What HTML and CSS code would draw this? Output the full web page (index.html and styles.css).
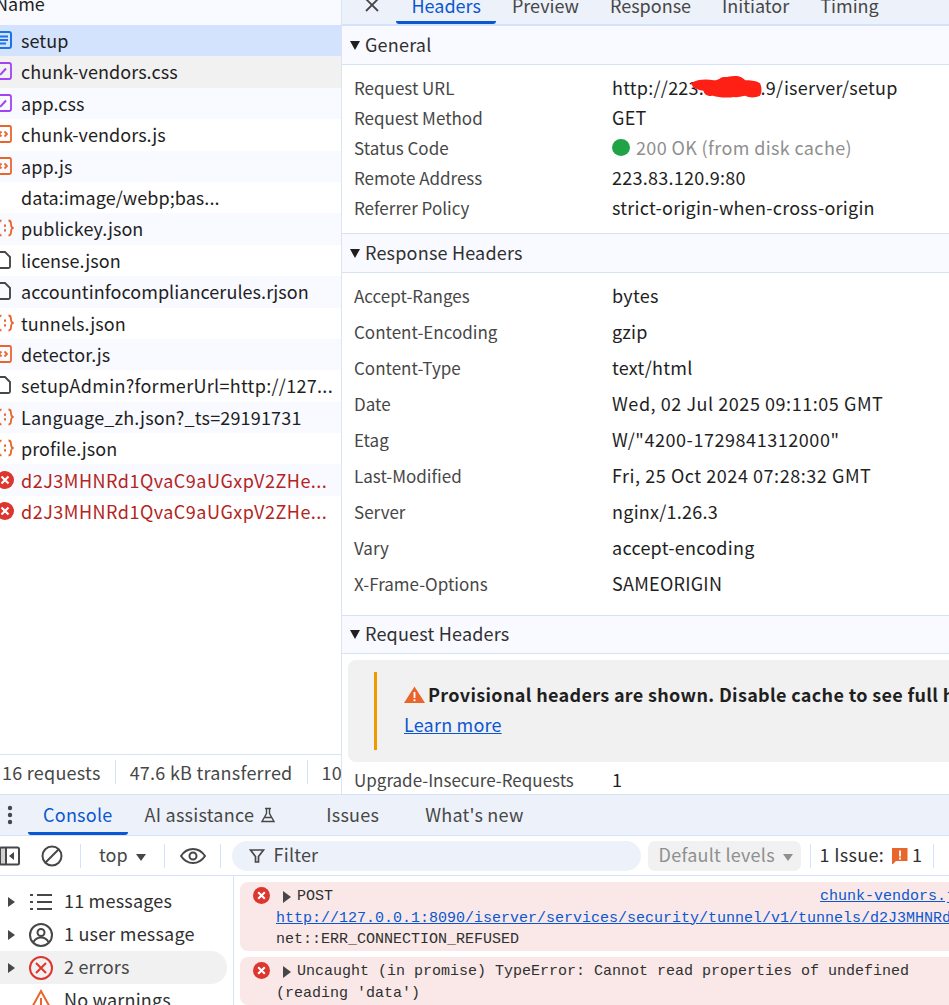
FILE: index.html
```html
<!DOCTYPE html>
<html lang="en">
<head>
<meta charset="utf-8">
<title>DevTools Network</title>
<link rel="stylesheet" href="styles.css">
</head>
<body>
<svg class="defs" width="0" height="0" aria-hidden="true">
  <defs>
    <symbol id="i-doc" viewBox="0 0 18 18"><rect x="1" y="1" width="16" height="16" rx="2" fill="#d3e3fd" stroke="#1a73e8" stroke-width="2"/><path d="M4 5.500h10M4 9h10M4 12.500h8" stroke="#1a73e8" stroke-width="1.800" fill="none"/></symbol>
    <symbol id="i-css" viewBox="0 0 18 18"><rect x="1" y="1" width="16" height="16" rx="2" fill="none" stroke="#a142f4" stroke-width="1.800"/><path d="M3 14l4-2 5-5.500" stroke="#a142f4" stroke-width="2" fill="none"/></symbol>
    <symbol id="i-js" viewBox="0 0 18 18"><rect x="1" y="1" width="16" height="16" rx="1.500" fill="none" stroke="#e8652b" stroke-width="1.800"/><path d="M7.500 6.500L5 9l2.500 2.500M10.500 6.500L13 9l-2.500 2.500" stroke="#e8652b" stroke-width="1.800" fill="none"/></symbol>
    <symbol id="i-json" viewBox="0 0 18 18"><path d="M5.500 1.500c-2.500 0-2.500 1.500-2.500 3.500 0 2.500-.5 3.500-2 4 1.500.5 2 1.500 2 4 0 2 0 3.500 2.500 3.500M12.500 1.500c2.500 0 2.500 1.500 2.500 3.500 0 2.500.5 3.500 2 4-1.500.5-2 1.500-2 4 0 2 0 3.500-2.500 3.500" stroke="#e8652b" stroke-width="1.800" fill="none"/><path d="M9 5.500v2.200M9 10.300v2.200" stroke="#e8652b" stroke-width="2" fill="none"/></symbol>
    <symbol id="i-file" viewBox="0 0 18 18"><path d="M2 2.500A1.500 1.500 0 0 1 3.500 1H11l5 5v9.500a1.500 1.500 0 0 1-1.500 1.500h-11A1.500 1.500 0 0 1 2 15.500z" fill="none" stroke="#474747" stroke-width="1.900"/></symbol>
    <symbol id="i-err" viewBox="0 0 18 18"><circle cx="9" cy="9" r="9" fill="#dc362e"/><path d="M5.500 5.500l7 7M12.500 5.500l-7 7" stroke="#fff" stroke-width="2.200" fill="none"/></symbol>
  </defs>
</svg>

<main class="page">
  <div class="top">
    <section class="list">
      <div class="list-head"><span>Name</span></div>
      <ul class="rows">
        <li class="row selected"><svg class="ficon"><use href="#i-doc"/></svg><span>setup</span></li>
        <li class="row hovered"><svg class="ficon"><use href="#i-css"/></svg><span>chunk-vendors.css</span></li>
        <li class="row"><svg class="ficon"><use href="#i-css"/></svg><span>app.css</span></li>
        <li class="row"><svg class="ficon"><use href="#i-js"/></svg><span>chunk-vendors.js</span></li>
        <li class="row"><svg class="ficon"><use href="#i-js"/></svg><span>app.js</span></li>
        <li class="row"><span class="ficon"></span><span>data:image/webp;bas...</span></li>
        <li class="row"><svg class="ficon brace"><use href="#i-json"/></svg><span>publickey.json</span></li>
        <li class="row"><svg class="ficon"><use href="#i-file"/></svg><span>license.json</span></li>
        <li class="row"><svg class="ficon"><use href="#i-file"/></svg><span>accountinfocompliancerules.rjson</span></li>
        <li class="row"><svg class="ficon brace"><use href="#i-json"/></svg><span>tunnels.json</span></li>
        <li class="row"><svg class="ficon"><use href="#i-js"/></svg><span>detector.js</span></li>
        <li class="row wide"><svg class="ficon"><use href="#i-file"/></svg><span>setupAdmin?formerUrl=http://127...</span></li>
        <li class="row mid"><svg class="ficon brace"><use href="#i-json"/></svg><span>Language_zh.json?_ts=29191731</span></li>
        <li class="row"><svg class="ficon brace"><use href="#i-json"/></svg><span>profile.json</span></li>
        <li class="row failed"><svg class="ficon brace"><use href="#i-err"/></svg><span>d2J3MHNRd1QvaC9aUGxpV2ZHe...</span></li>
        <li class="row failed"><svg class="ficon brace"><use href="#i-err"/></svg><span>d2J3MHNRd1QvaC9aUGxpV2ZHe...</span></li>
      </ul>
      <div class="summary">
        <span class="sum-item first">16 requests</span>
        <span class="sum-item">47.6 kB transferred</span>
        <span class="sum-item">10</span>
      </div>
    </section>

    <section class="detail">
      <nav class="tabs">
        <svg class="close" width="16" height="16" viewBox="0 0 16 16"><path d="M2 2l12 12M14 2L2 14" stroke="#474747" stroke-width="1.800" fill="none"/></svg>
        <span class="tab active">Headers</span>
        <span class="tab">Preview</span>
        <span class="tab">Response</span>
        <span class="tab">Initiator</span>
        <span class="tab">Timing</span>
      </nav>

      <h3 class="sec"><i class="tri"></i><span>General</span></h3>
      <dl class="kv general">
        <div class="pair"><dt>Request URL</dt><dd class="url">http://223.83.120.9/iserver/setup<svg class="redact" width="75" height="23" viewBox="0 0 70 22"><path d="M1 7c6-4 14-4 22-3 6 0 6-4 11-3 2 0 5-1 9-1 5 0 8 2 10 4 4 0 10 0 14 3 2 4 2 9 0 12-5 2-10 2-14 0-6 1-8 2-11 1-4 1-15 1-20-1-6 1-9-3-9-5-5 0-11-3-12-7z" fill="#fe2015"/></svg></dd></div>
        <div class="pair"><dt>Request Method</dt><dd>GET</dd></div>
        <div class="pair"><dt>Status Code</dt><dd class="status"><i class="dot"></i>200 OK (from disk cache)</dd></div>
        <div class="pair"><dt>Remote Address</dt><dd>223.83.120.9:80</dd></div>
        <div class="pair"><dt>Referrer Policy</dt><dd>strict-origin-when-cross-origin</dd></div>
      </dl>

      <h3 class="sec"><i class="tri"></i><span>Response Headers</span></h3>
      <dl class="kv resp">
        <div class="pair"><dt>Accept-Ranges</dt><dd>bytes</dd></div>
        <div class="pair"><dt>Content-Encoding</dt><dd>gzip</dd></div>
        <div class="pair"><dt>Content-Type</dt><dd>text/html</dd></div>
        <div class="pair"><dt>Date</dt><dd class="num">Wed, 02 Jul 2025 09:11:05 GMT</dd></div>
        <div class="pair"><dt>Etag</dt><dd class="num">W/"4200-1729841312000"</dd></div>
        <div class="pair"><dt>Last-Modified</dt><dd class="num">Fri, 25 Oct 2024 07:28:32 GMT</dd></div>
        <div class="pair"><dt>Server</dt><dd>nginx/1.26.3</dd></div>
        <div class="pair"><dt>Vary</dt><dd>accept-encoding</dd></div>
        <div class="pair"><dt>X-Frame-Options</dt><dd>SAMEORIGIN</dd></div>
      </dl>

      <h3 class="sec short"><i class="tri"></i><span>Request Headers</span></h3>
      <div class="callout">
        <div class="callout-inner">
          <p class="callout-title"><svg class="warn" width="21" height="17" viewBox="0 0 21 17"><path d="M10.500 .5L21 17H0z" fill="#e8652b"/><path d="M10.500 6v6M10.500 13.300v2" stroke="#fff" stroke-width="1.800" fill="none"/></svg><span>Provisional headers are shown. Disable cache to see full headers.</span></p>
          <a class="learn" href="#">Learn more</a>
        </div>
      </div>
      <div class="pair last"><dt>Upgrade-Insecure-Requests</dt><dd>1</dd></div>
    </section>
  </div>

  <div class="drawer">
    <nav class="dtabs">
      <svg class="kebab" width="6" height="20" viewBox="0 0 6 20"><circle cx="3" cy="3" r="2.200" fill="#474747"/><circle cx="3" cy="10" r="2.200" fill="#474747"/><circle cx="3" cy="17" r="2.200" fill="#474747"/></svg>
      <span class="dtab active"><span>Console</span></span>
      <span class="dtab ai"><span>AI assistance</span><svg width="16" height="16" viewBox="0 0 16 16"><path d="M5 1.500h6M6.500 1.500v5L2 14.500h12L9.500 6.500v-5M4.500 10.500h7" stroke="#474747" stroke-width="1.400" fill="none"/></svg></span>
      <span class="dtab"><span>Issues</span></span>
      <span class="dtab"><span>What's new</span></span>
    </nav>
    <div class="toolbar">
      <svg class="tool-side" width="21" height="20" viewBox="0 0 21 20"><rect x="1" y="1.500" width="19" height="17" rx="1.500" fill="none" stroke="#474747" stroke-width="2"/><path d="M7 1.500v17" stroke="#474747" stroke-width="2"/><path d="M1 2h6v16H1z" fill="#474747" opacity=".25"/><path d="M15 6v8l-5-4z" fill="#474747"/></svg>
      <svg class="tool-clear" width="22" height="22" viewBox="0 0 22 22"><circle cx="11" cy="11" r="9.500" fill="none" stroke="#474747" stroke-width="2"/><path d="M4.500 17.500l13-13" stroke="#474747" stroke-width="2"/></svg>
      <i class="sep"></i>
      <span class="ctx"><span class="tt">top</span><i class="caret"></i></span>
      <i class="sep"></i>
      <svg class="tool-eye" width="26" height="16" viewBox="0 0 26 16"><path d="M1 8c3-4.500 7-7 12-7s9 2.500 12 7c-3 4.500-7 7-12 7S4 12.500 1 8z" fill="none" stroke="#474747" stroke-width="2"/><circle cx="13" cy="8" r="3.500" fill="none" stroke="#474747" stroke-width="2"/></svg>
      <i class="sep"></i>
      <div class="filter"><svg width="16" height="16" viewBox="0 0 16 16"><path d="M1.500 2h13L9.500 8.500V14h-3V8.500z" fill="none" stroke="#474747" stroke-width="1.700"/></svg><span class="tt">Filter</span></div>
      <div class="levels"><span class="tt">Default levels</span><i class="caret grey"></i></div>
      <i class="sep"></i>
      <span class="issues"><span class="tt">1 Issue:</span><svg width="16" height="18" viewBox="0 0 16 18"><path d="M0 1h15.500v13H4l-3 3H0z" fill="#e8652b"/><path d="M8 3.500v6M8 10.500v2" stroke="#fff" stroke-width="1.800"/></svg><span class="tt">1</span></span>
      <i class="sep"></i>
    </div>
    <div class="console">
      <aside class="side">
        <div class="side-row"><i class="arrow"></i><svg width="24" height="24" viewBox="0 0 24 24"><path d="M8 5h15M8 12h15M8 19h15" stroke="#474747" stroke-width="2"/><path d="M1 5h3M1 12h3M1 19h3" stroke="#474747" stroke-width="2"/></svg><span class="tt">11 messages</span></div>
        <div class="side-row"><i class="arrow"></i><svg width="24" height="24" viewBox="0 0 24 24"><circle cx="12" cy="12" r="11" fill="none" stroke="#474747" stroke-width="2"/><circle cx="12" cy="9.500" r="3.500" fill="none" stroke="#474747" stroke-width="2"/><path d="M4.500 19c2-3.500 5-4.500 7.500-4.500s5.500 1 7.500 4.500" fill="none" stroke="#474747" stroke-width="2"/></svg><span class="tt">1 user message</span></div>
        <div class="side-row on"><i class="arrow"></i><svg width="24" height="24" viewBox="0 0 24 24"><circle cx="12" cy="12" r="11" fill="none" stroke="#dc362e" stroke-width="2"/><path d="M7 7l10 10M17 7L7 17" stroke="#dc362e" stroke-width="2"/></svg><span class="tt">2 errors</span></div>
        <div class="side-row"><i class="arrow none"></i><svg width="24" height="24" viewBox="0 0 24 24"><path d="M12 2l11 20H1z" fill="none" stroke="#e8652b" stroke-width="2"/><path d="M12 9v7M12 18v2" stroke="#e8652b" stroke-width="2"/></svg><span class="tt">No warnings</span></div>
      </aside>
      <div class="log">
        <div class="msg m1">
          <svg class="msg-icon"><use href="#i-err"/></svg>
          <div class="msg-body">
            <div class="msg-line"><i class="arrow dark"></i><span>POST</span><a class="src" href="#">chunk-vendors.js:2</a></div>
            <div><a href="#">http://127.0.0.1:8090/iserver/services/security/tunnel/v1/tunnels/d2J3MHNRd1QvaC9aUGxpV2ZHe</a></div>
            <div>net::ERR_CONNECTION_REFUSED</div>
          </div>
        </div>
        <div class="msg m2">
          <svg class="msg-icon"><use href="#i-err"/></svg>
          <div class="msg-body">
            <div class="msg-line"><i class="arrow dark"></i><span>Uncaught (in promise) TypeError: Cannot read properties of undefined</span></div>
            <div>(reading 'data')</div>
          </div>
        </div>
      </div>
    </div>
  </div>
</main>
</body>
</html>
```
FILE: styles.css
```css
* { box-sizing: border-box; }
html, body { margin: 0; padding: 0; overflow: hidden; background: #fff; }
body { width: 949px; height: 1005px; font-family: "Noto Sans CJK SC", "Noto Sans", sans-serif; font-size: 18px; color: #1f1f1f; }
.defs { display: block; height: 0; }
.page { display: flex; flex-direction: column; height: 1005px; width: 949px; overflow: hidden; }
.top { display: flex; height: 795px; flex: none; border-bottom: 1px solid #d6e2f5; }

.list { width: 342px; flex: none; border-right: 1px solid #dbe4f3; display: flex; flex-direction: column; }
.list-head { height: 25px; flex: none; background: #f9faff; display: flex; align-items: flex-end; overflow: hidden; }
.list-head span { margin-left: -5px; line-height: 26px; transform: translateY(-9px); }
.rows { list-style: none; margin: 0; padding: 0; flex: 1; }
.row { height: 31.4px; display: flex; align-items: center; gap: 9px; padding-bottom: 1.2px; white-space: nowrap; overflow: hidden; letter-spacing: .06px; }
.row:nth-child(odd) { background: #f9faff; }
.row:nth-child(even) { background: #fff; }
.row.selected { background: #d3e3fd; }
.row.hovered { background: #f1f1f1; }
.row.wide { letter-spacing: .3px; }
.row.mid { letter-spacing: .17px; }
.row.failed { color: #b3261e; letter-spacing: .5px; }
.ficon { width: 18px; height: 18px; flex: none; margin-left: -6px; display: block; }
.ficon.brace { margin-left: -4px; margin-right: -2px; }
.summary { height: 40px; flex: none; border-top: 1px solid #d6e2f5; display: flex; align-items: center; padding-bottom: 6px; color: #474747; white-space: nowrap; overflow: hidden; letter-spacing: .25px; }
.sum-item { padding: 0 14px; border-left: 1px solid #d6e2f5; line-height: 24px; }
.sum-item.first { padding-left: 2px; border-left: 0; }

.detail { flex: 1; min-width: 0; overflow: hidden; display: flex; flex-direction: column; }
.tabs { height: 26px; flex: none; background: #edf2fa; border-bottom: 2px solid #d3e3fd; display: flex; align-items: flex-start; padding-left: 22px; }
.close { flex: none; margin-top: -3px; margin-right: 16px; }
.tab { height: 26px; padding: 0 15.5px; margin-top: -2px; line-height: 14px; color: #474747; flex: none; }
.tab.active { color: #0b57d0; border-bottom: 3px solid #0b57d0; border-radius: 0 0 3px 3px; }
.sec { margin: 0; height: 39px; flex: none; display: flex; align-items: center; background: #f9faff; border-bottom: 1px solid #d6e2f5; font-size: 18px; font-weight: 400; color: #303030; padding: 0 0 2px 8px; letter-spacing: .2px; }
.sec.short { height: 38px; padding-bottom: 3px; }
.tri { width: 0; height: 0; border-left: 5px solid transparent; border-right: 5px solid transparent; border-top: 9px solid #1f1f1f; margin: 2px 5px 0 0; }
.kv { margin: 0; display: flex; flex-direction: column; border-bottom: 1px solid #d6e2f5; flex: none; }
.general { padding: 7px 0 11px; }
.general .pair { height: 30px; }
.resp { padding: 4px 0 14px; }
.resp .pair { height: 36px; }
.pair { display: flex; align-items: center; padding-left: 12px; white-space: nowrap; }
dt { width: 258px; flex: none; color: #474747; font-size: 17px; }
dd { margin: 0; color: #1f1f1f; position: relative; letter-spacing: .25px; }
dd.num { letter-spacing: .55px; }
.status { display: flex; align-items: center; color: #8f8f8f; letter-spacing: .37px; }
.dot { width: 18px; height: 17px; border-radius: 50%; background: #1ea446; margin-right: 6px; flex: none; }
.redact { position: absolute; left: 77px; top: 2px; }
.callout { margin: 6px 0 0 6px; height: 102px; background: #f1f1f1; border-radius: 8px 0 0 8px; padding: 12px 0 12px 26px; flex: none; }
.callout-inner { border-left: 3px solid #f29900; height: 78px; padding-left: 27px; white-space: nowrap; }
.callout-title { margin: 0; height: 39px; display: flex; align-items: center; font-weight: 700; gap: 3px; padding-top: 5px; letter-spacing: .33px; }
.warn { flex: none; }
.learn { color: #0b57d0; display: inline-block; line-height: 24px; letter-spacing: .2px; }
.pair.last { height: 34px; flex: none; }

.drawer { flex: 1; min-height: 0; display: flex; flex-direction: column; }
.dtabs { height: 41px; flex: none; background: #edf2fa; border-bottom: 1px solid #d3e3fd; display: flex; align-items: center; padding-left: 7px; white-space: nowrap; letter-spacing: .25px; }
.kebab { flex: none; margin-right: 15px; }
.dtab { height: 40px; padding: 0 15px 2px; color: #474747; display: flex; align-items: center; gap: 8px; flex: none; margin-right: 16px; }
.dtab.active { color: #0b57d0; border-bottom: 3px solid #0b57d0; border-radius: 0 0 3px 3px; margin-right: 0; padding-bottom: 0; }
.dtab.ai { margin-right: 20px; padding-left: 17px; gap: 6px; }
.dtab svg { margin-top: 2px; }

.toolbar { height: 40px; flex: none; border-bottom: 1px solid #d3e3fd; display: flex; align-items: center; white-space: nowrap; overflow: hidden; }
.toolbar svg { flex: none; }
.tt { padding-bottom: 3px; }
.tool-side { margin-left: -1px; margin-right: 21px; }
.tool-clear { margin-right: 17px; }
.sep { width: 1px; height: 24px; background: #d3e3fd; flex: none; }
.ctx { display: flex; align-items: center; color: #474747; padding: 0 18px 0 18px; }
.caret { width: 0; height: 0; border-left: 5.500px solid transparent; border-right: 5.500px solid transparent; border-top: 7px solid #474747; margin-left: 8px; margin-top: 3px; }
.caret.grey { border-top-color: #8f8f8f; }
.tool-eye { margin: 0 14px 0 15px; }
.filter { width: 409px; height: 30px; border-radius: 15px; background: #edf2fa; margin-left: 11px; display: flex; align-items: center; gap: 9px; padding-left: 17px; color: #474747; flex: none; letter-spacing: .2px; }
.levels { width: 153px; height: 30px; border-radius: 7px; background: #f1f1f1; color: #8f8f8f; margin: 0 9px 0 7px; display: flex; align-items: center; padding-left: 11px; flex: none; letter-spacing: .25px; }
.issues { display: flex; align-items: center; padding: 0 11px 0 9px; color: #303030; gap: 8px; letter-spacing: .3px; }
.issues svg { margin-right: -4px; }

.console { flex: 1; min-height: 0; display: flex; overflow: hidden; }
.side { width: 234px; flex: none; border-right: 1px solid #d6e2f5; padding-top: 9px; letter-spacing: .2px; }
.side-row { height: 33px; display: flex; align-items: center; gap: 8px; padding-left: 8px; border-radius: 0 16px 16px 0; margin-right: 6px; color: #303030; white-space: nowrap; }
.side-row svg { flex: none; margin-right: 3px; }
.side-row.on { background: #f1f1f1; color: #474747; }
.arrow { width: 0; height: 0; border-top: 5.500px solid transparent; border-bottom: 5.500px solid transparent; border-left: 7px solid #474747; flex: none; margin-right: 6px; display: inline-block; }
.arrow.none { visibility: hidden; }

.log { flex: 1; min-width: 0; padding: 6px 0 0 6px; font-family: "Liberation Mono", monospace; font-size: 15px; line-height: 21.5px; color: #303030; overflow: hidden; }
.msg { background: #f9e8e7; display: flex; border-radius: 8px 0 0 8px; padding-top: 4px; margin-bottom: 6px; }
.msg-icon { width: 17px; height: 17px; flex: none; margin: 1px 6px 0 13px; display: block; }
.msg-body { flex: 1; min-width: 0; overflow: hidden; white-space: nowrap; }
.msg-line { display: flex; align-items: center; padding-left: 7px; }
.arrow.dark { margin: 0 6px 0 0; border-left-width: 8px; border-top-width: 6px; border-bottom-width: 6px; }
.msg a { color: #0b57d0; }
.src { flex: none; margin-left: 487px; }
.m1 { height: 69px; }
.m2 { height: 48px; }
```
